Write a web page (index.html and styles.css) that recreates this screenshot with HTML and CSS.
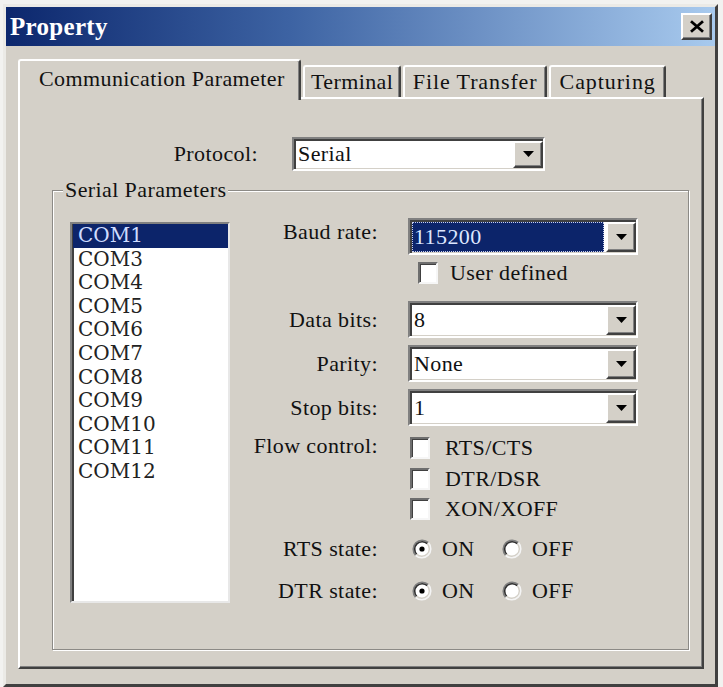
FILE: index.html
```html
<!DOCTYPE html>
<html lang="en">
<head>
<meta charset="utf-8">
<title>Property</title>
<link rel="stylesheet" href="styles.css">
</head>
<body>
<div class="window">
  <div class="titlebar">
    <span class="title">Property</span>
    <button class="close-btn" type="button" aria-label="Close">
      <svg width="16" height="13" viewBox="0 0 16 13"><path d="M2 1.2 L14 11.8 M14 1.2 L2 11.8" stroke="#000" stroke-width="2.8" fill="none"/></svg>
    </button>
  </div>

  <div class="client">
    <div class="tabs">
      <div class="tab tab-active">Communication Parameter</div>
      <div class="tab tab-terminal">Terminal</div>
      <div class="tab tab-transfer">File Transfer</div>
      <div class="tab tab-capture">Capturing</div>
    </div>

    <div class="tab-panel">
      <div class="protocol-row">
        <span class="field-label">Protocol:</span>
        <div class="combo combo-protocol">
          <span class="combo-value">Serial</span>
          <span class="combo-btn"><svg width="11" height="6" viewBox="0 0 11 6"><path d="M0 0 H11 L5.5 6 Z" fill="#000"/></svg></span>
        </div>
      </div>

      <fieldset class="group">
        <legend>Serial Parameters</legend>
        <div class="group-body">
          <ul class="listbox">
            <li class="selected">COM1</li>
            <li>COM3</li>
            <li>COM4</li>
            <li>COM5</li>
            <li>COM6</li>
            <li>COM7</li>
            <li>COM8</li>
            <li>COM9</li>
            <li>COM10</li>
            <li>COM11</li>
            <li>COM12</li>
          </ul>

          <div class="form">
            <span class="field-label baud-label">Baud rate:</span>
            <div class="combo">
              <span class="combo-value"><span class="focused-value">115200</span></span>
              <span class="combo-btn"><svg width="11" height="6" viewBox="0 0 11 6"><path d="M0 0 H11 L5.5 6 Z" fill="#000"/></svg></span>
            </div>

            <span></span>
            <div class="check user-defined"><span class="check-box"></span><span>User defined</span></div>

            <span class="field-label">Data bits:</span>
            <div class="combo">
              <span class="combo-value">8</span>
              <span class="combo-btn"><svg width="11" height="6" viewBox="0 0 11 6"><path d="M0 0 H11 L5.5 6 Z" fill="#000"/></svg></span>
            </div>

            <span class="field-label">Parity:</span>
            <div class="combo">
              <span class="combo-value">None</span>
              <span class="combo-btn"><svg width="11" height="6" viewBox="0 0 11 6"><path d="M0 0 H11 L5.5 6 Z" fill="#000"/></svg></span>
            </div>

            <span class="field-label">Stop bits:</span>
            <div class="combo">
              <span class="combo-value">1</span>
              <span class="combo-btn"><svg width="11" height="6" viewBox="0 0 11 6"><path d="M0 0 H11 L5.5 6 Z" fill="#000"/></svg></span>
            </div>

            <span class="field-label flow-label">Flow control:</span>
            <div class="check-list">
              <div class="check"><span class="check-box"></span><span>RTS/CTS</span></div>
              <div class="check"><span class="check-box"></span><span>DTR/DSR</span></div>
              <div class="check"><span class="check-box"></span><span>XON/XOFF</span></div>
            </div>

            <span class="field-label state-label">RTS state:</span>
            <div class="radio-row">
              <span class="radio radio-on">
                <svg width="20" height="20" viewBox="0 0 20 20"><circle cx="10" cy="10" r="8.5" fill="#fff"/><path d="M3.64 16.36 A9 9 0 0 1 16.36 3.64" stroke="#808080" stroke-width="1.6" fill="none"/><path d="M16.36 3.64 A9 9 0 0 1 3.64 16.36" stroke="#f4f4f4" stroke-width="1.6" fill="none"/><path d="M4.7 15.3 A7.5 7.5 0 0 1 15.3 4.7" stroke="#303030" stroke-width="1.6" fill="none"/><path d="M15.3 4.7 A7.5 7.5 0 0 1 4.7 15.3" stroke="#d4d0c8" stroke-width="1.4" fill="none"/><circle cx="10" cy="10" r="2.6" fill="#000"/></svg>
                <span>ON</span>
              </span>
              <span class="radio">
                <svg width="20" height="20" viewBox="0 0 20 20"><circle cx="10" cy="10" r="8.5" fill="#fff"/><path d="M3.64 16.36 A9 9 0 0 1 16.36 3.64" stroke="#808080" stroke-width="1.6" fill="none"/><path d="M16.36 3.64 A9 9 0 0 1 3.64 16.36" stroke="#f4f4f4" stroke-width="1.6" fill="none"/><path d="M4.7 15.3 A7.5 7.5 0 0 1 15.3 4.7" stroke="#303030" stroke-width="1.6" fill="none"/><path d="M15.3 4.7 A7.5 7.5 0 0 1 4.7 15.3" stroke="#d4d0c8" stroke-width="1.4" fill="none"/></svg>
                <span>OFF</span>
              </span>
            </div>

            <span class="field-label state-label">DTR state:</span>
            <div class="radio-row">
              <span class="radio radio-on">
                <svg width="20" height="20" viewBox="0 0 20 20"><circle cx="10" cy="10" r="8.5" fill="#fff"/><path d="M3.64 16.36 A9 9 0 0 1 16.36 3.64" stroke="#808080" stroke-width="1.6" fill="none"/><path d="M16.36 3.64 A9 9 0 0 1 3.64 16.36" stroke="#f4f4f4" stroke-width="1.6" fill="none"/><path d="M4.7 15.3 A7.5 7.5 0 0 1 15.3 4.7" stroke="#303030" stroke-width="1.6" fill="none"/><path d="M15.3 4.7 A7.5 7.5 0 0 1 4.7 15.3" stroke="#d4d0c8" stroke-width="1.4" fill="none"/><circle cx="10" cy="10" r="2.6" fill="#000"/></svg>
                <span>ON</span>
              </span>
              <span class="radio">
                <svg width="20" height="20" viewBox="0 0 20 20"><circle cx="10" cy="10" r="8.5" fill="#fff"/><path d="M3.64 16.36 A9 9 0 0 1 16.36 3.64" stroke="#808080" stroke-width="1.6" fill="none"/><path d="M16.36 3.64 A9 9 0 0 1 3.64 16.36" stroke="#f4f4f4" stroke-width="1.6" fill="none"/><path d="M4.7 15.3 A7.5 7.5 0 0 1 15.3 4.7" stroke="#303030" stroke-width="1.6" fill="none"/><path d="M15.3 4.7 A7.5 7.5 0 0 1 4.7 15.3" stroke="#d4d0c8" stroke-width="1.4" fill="none"/></svg>
                <span>OFF</span>
              </span>
            </div>
          </div>
        </div>
      </fieldset>
    </div>
  </div>
</div>
</body>
</html>
```

FILE: styles.css
```css
* {
  box-sizing: border-box;
}

html,
body {
  margin: 0;
}

body {
  background: #f2f2f0;
  font-family: "Liberation Serif", "Times New Roman", serif;
  font-size: 22px;
  letter-spacing: 0.4px;
  color: #111;
}

/* dialog frame */
.window {
  margin: 4px 0 0 3px;
  width: 715px;
  height: 683px;
  background: #d4d0c8;
  border: 3px solid;
  border-color: #ebeae6 #404040 #404040 #ebeae6;
}

.titlebar {
  height: 39px;
  display: flex;
  align-items: center;
  justify-content: space-between;
  padding: 0 3px 0 4px;
  background: linear-gradient(90deg, #0c276d 0%, #3d63a3 40%, #a8caee 100%);
}

.title {
  font-weight: bold;
  font-size: 25px;
  letter-spacing: 0.3px;
  color: #fff;
}

.close-btn {
  width: 31px;
  height: 27px;
  padding: 0;
  display: flex;
  align-items: center;
  justify-content: center;
  background: #d4d0c8;
  border: 2px solid;
  border-color: #fff #404040 #404040 #fff;
  box-shadow: inset -1px -1px 0 #808080;
}

.client {
  padding: 13px 11px 0 12px;
}

/* tab strip */
.tabs {
  display: flex;
  align-items: flex-end;
  height: 41px;
  margin-bottom: -3px;
  position: relative;
  z-index: 1;
}

.tab {
  height: 32px;
  margin-bottom: 3px;
  margin-left: 2px;
  padding: 0 0 0 1px;
  display: flex;
  align-items: center;
  justify-content: center;
  background: #d4d0c8;
  border: 2px solid;
  border-bottom: none;
  border-color: #fff #404040 #fff #fff;
  border-radius: 3px 3px 0 0;
  box-shadow: inset -1px 0 0 #808080;
  white-space: nowrap;
}

.tab-terminal {
  width: 98px;
}

.tab-transfer {
  width: 144px;
  letter-spacing: 0.9px;
}

.tab-capture {
  width: 117px;
  letter-spacing: 0.9px;
}

.tab-active {
  height: 41px;
  margin: 0;
  padding: 0 14px 4px 19px;
}

.tab-panel {
  height: 572px;
  padding: 36px 0 0 0;
  border: 2px solid;
  border-color: #fff #404040 #404040 #fff;
  box-shadow: inset -1px -1px 0 #808080;
}

.protocol-row {
  display: grid;
  grid-template-columns: 238px 253px;
  column-gap: 34px;
  align-items: center;
}

.field-label {
  text-align: right;
  line-height: 37px;
  white-space: nowrap;
}

/* combo boxes */
.combo {
  height: 37px;
  display: flex;
  background: #fff;
  border: 2px solid;
  border-color: #808080 #fff #fff #808080;
  box-shadow: inset 2px 2px 0 #404040, inset -1px -1px 0 #d4d0c8;
}

.combo-protocol {
  height: 34px;
}

.combo-value {
  flex: 1;
  display: flex;
  align-items: center;
  padding: 2px 0 1px 4px;
  white-space: nowrap;
}

.focused-value {
  flex: 1;
  align-self: stretch;
  display: flex;
  align-items: center;
  margin: 0 2px 0 -2px;
  padding-left: 2px;
  background: #0c246a;
  color: #dde6ff;
  outline: 1px dotted #c8d0f0;
  outline-offset: -1px;
}

.combo-btn {
  width: 30px;
  margin: 2px 0 1px 0;
  display: flex;
  align-items: center;
  justify-content: center;
  background: #d4d0c8;
  border: 2px solid;
  border-color: #fff #404040 #404040 #fff;
  box-shadow: inset -1px -1px 0 #808080;
}

/* group box */
.group {
  margin: 5px 13px 0 32px;
  padding: 15px 14px 37px 17px;
  min-width: 0;
  border: 1px solid #8c8a86;
  box-shadow: 1px 1px 0 #fff, inset 1px 1px 0 #fff;
}

.group legend {
  margin-left: -7px;
  padding: 0 2px;
  line-height: 26px;
  background: #d4d0c8;
}

.group-body {
  display: flex;
  align-items: flex-start;
}

.listbox {
  width: 160px;
  height: 381px;
  margin: 4px 0 0 0;
  padding: 0;
  list-style: none;
  background: #fff;
  border: 2px solid;
  border-color: #808080 #e8e8e8 #e8e8e8 #808080;
  box-shadow: inset 2px 0 0 #404040, inset 0 1px 0 #404040;
  font-family: "DejaVu Serif", "Liberation Serif", serif;
  font-size: 20px;
  letter-spacing: 0;
  color: #222;
}

.listbox li {
  height: 23.6px;
  line-height: 23.6px;
  padding-left: 6px;
}

.listbox li.selected {
  margin: 0 0 0 1px;
  padding-left: 5px;
  background: #0c246a;
  color: #cfdcff;
}

.form {
  display: grid;
  grid-template-columns: 148px 230px;
  grid-template-rows: 37px 46px 44px 44px 44px 95px 42px 42px;
  column-gap: 30px;
  align-items: start;
}

.baud-label {
  line-height: 28px;
}

.flow-label {
  line-height: 26px;
}

.state-label {
  line-height: 42px;
}

/* check boxes */
.check {
  display: flex;
  align-items: flex-start;
  gap: 15px;
  height: 30.5px;
  line-height: 22px;
  margin-left: 2px;
}

.check-box {
  width: 20px;
  height: 22px;
  flex: none;
  background: #fff;
  border: 2px solid;
  border-color: #6e6e6e #f6f6f6 #f6f6f6 #6e6e6e;
  box-shadow: inset 1px 1px 0 #404040;
}

.user-defined {
  margin: 7px 0 0 10px;
  gap: 12px;
}

.check-list {
  padding-top: 4px;
}

/* radio buttons */
.radio-row {
  height: 42px;
  display: flex;
  align-items: center;
  padding-left: 4px;
}

.radio {
  display: flex;
  align-items: center;
  gap: 10px;
}

.radio-on {
  width: 90px;
}

.radio svg {
  flex: none;
}
```
